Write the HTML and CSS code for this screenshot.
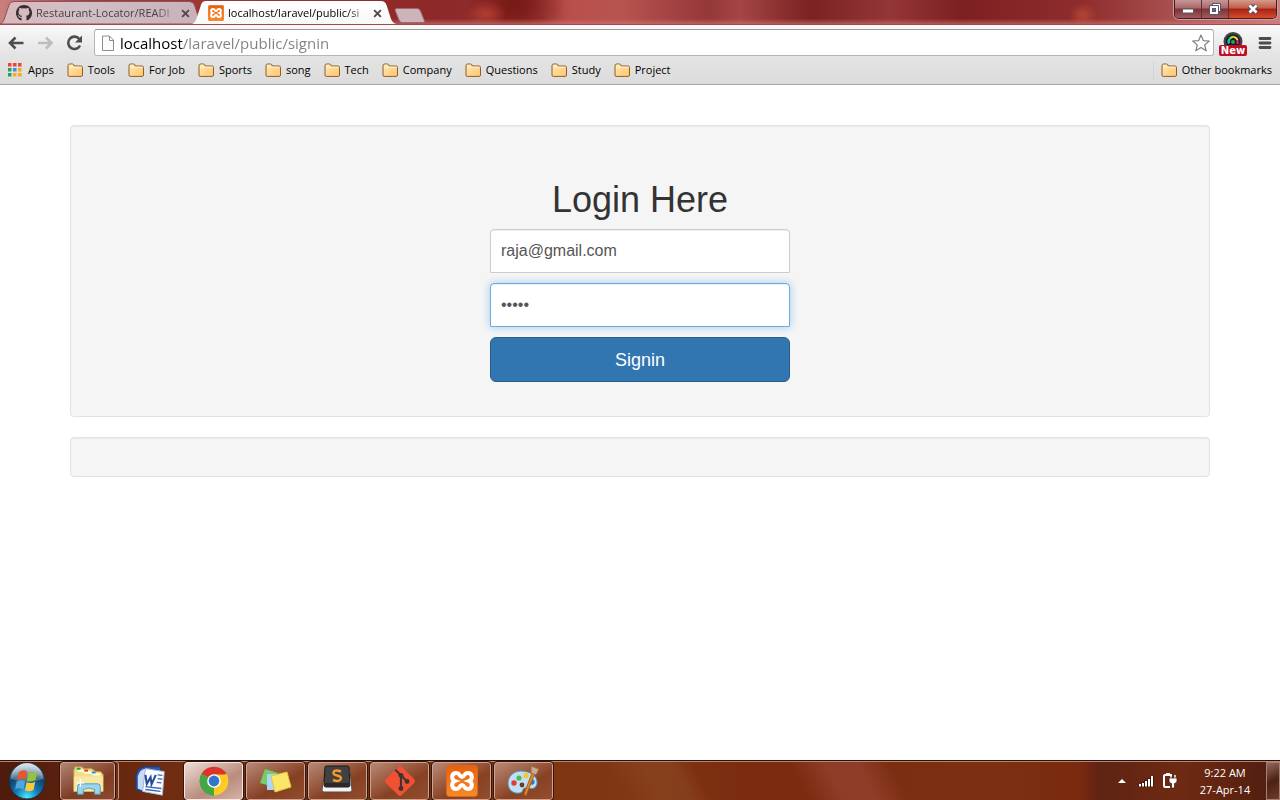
FILE: index.html
```html
<!DOCTYPE html>
<html lang="en">
<head>
<meta charset="utf-8">
<meta name="viewport" content="width=device-width, initial-scale=1">
<title>localhost/laravel/public/signin</title>
<link rel="stylesheet" href="styles.css">
</head>
<body>
<svg class="defs" width="0" height="0" aria-hidden="true">
  <defs>
    <linearGradient id="gold" x1="0" y1="0" x2="1" y2="1"><stop offset="0" stop-color="#ffe9b0"/><stop offset="1" stop-color="#ffc56d"/></linearGradient>
    <linearGradient id="orange" x1="0" y1="0" x2="0" y2="1"><stop offset="0" stop-color="#e8600c"/><stop offset="1" stop-color="#f98a28"/></linearGradient>
    <linearGradient id="tabOn" x1="0" y1="0" x2="0" y2="1"><stop offset="0" stop-color="#fff"/><stop offset="1" stop-color="#f8f8f8"/></linearGradient>
    <linearGradient id="tabOff" x1="0" y1="0" x2="1" y2="0"><stop offset="0" stop-color="#d9b9bd"/><stop offset=".4" stop-color="#cfc0c6"/><stop offset="1" stop-color="#c9b0b8"/></linearGradient>
    <radialGradient id="orb" cx=".5" cy=".95" r=".9"><stop offset="0" stop-color="#4fe6ff"/><stop offset=".35" stop-color="#127fb5"/><stop offset=".7" stop-color="#123f68"/><stop offset="1" stop-color="#7ba3bd"/></radialGradient>
    <linearGradient id="shine" x1="0" y1="0" x2="0" y2="1"><stop offset="0" stop-color="#fff" stop-opacity=".75"/><stop offset="1" stop-color="#fff" stop-opacity=".15"/></linearGradient>
  </defs>
  <symbol id="folder" viewBox="0 0 16 14">
    <path d="M1 12V2.500Q1 1 2.500 1H5.500Q7 1 7.300 3H14Q15.500 3 15.500 4.500V12Q15.500 13.400 14.200 13.400H2.200Q1 13.400 1 12Z" fill="url(#gold)" stroke="#8a5d33"/>
    <path d="M2 4.200H14.500M3 2.300H5.500" stroke="#fff3cf" fill="none"/>
  </symbol>
  <symbol id="xampp" viewBox="0 0 32 32">
    <rect x=".5" y=".5" width="31" height="31" rx="3" fill="url(#orange)" stroke="#d9661a"/>
    <path d="M10.500 8C5 8 5 14.500 9 16C5 17.500 5 24 10.500 24C14 24 13.500 20 16 20S18 24 21.500 24C27 24 27 17.500 23 16C27 14.500 27 8 21.500 8C18 8 18.500 12 16 12S14 8 10.500 8Z" fill="none" stroke="#fff" stroke-width="4"/>
  </symbol>
  <symbol id="cross" viewBox="0 0 8 8"><path d="M1 1L7 7M7 1L1 7" stroke="#54484b" stroke-width="1.700"/></symbol>
</svg>

<header class="titlebar">
  <nav class="tabs" aria-label="Tabs">
    <div class="tab">
      <svg class="shape" viewBox="0 0 204 24" preserveAspectRatio="none" aria-hidden="true"><path d="M0 24C3 23 4 20 5 17L9 5Q10 1.500 14 1.500H189Q193 1.500 194.500 5L199 19Q200.500 23 204 24Z" fill="url(#tabOff)" stroke="#8d5259"/></svg>
      <svg class="fav" viewBox="0 0 16 16" aria-hidden="true"><path d="M5.500 15.600V12.800C3.300 13.200 2.800 12 2.400 11.200L1.500 10.400Q2.900 10 3.700 11.300Q4.400 12.300 5.600 11.800L6 10.800C3.700 10.500 2.500 9.300 2.500 7Q2.500 5.800 3.300 4.900Q3 3.800 3.500 2.800Q4.600 2.800 5.800 3.600Q8 3 10.200 3.600Q11.400 2.800 12.500 2.800Q13 3.800 12.700 4.900Q13.500 5.800 13.500 7C13.500 9.300 12.300 10.500 10 10.800Q10.500 11.400 10.500 12.300V15.600A8 8 0 1 0 5.500 15.600Z" fill="#382d30"/></svg>
      <a class="tab-name" href="#">Restaurant-Locator/READI</a>
      <button class="tab-close" aria-label="Close tab"><svg viewBox="0 0 8 8"><use href="#cross"/></svg></button>
    </div>
    <div class="tab active">
      <svg class="shape" viewBox="0 0 204 24" preserveAspectRatio="none" aria-hidden="true"><path d="M0 24C3 23 4 20 5 17L9 5Q10 1 14 1H189Q193 1 194.500 5L199 19Q200.500 23 204 24Z" fill="url(#tabOn)"/></svg>
      <svg class="fav" viewBox="0 0 32 32" aria-hidden="true"><use href="#xampp"/></svg>
      <a class="tab-name" href="#">localhost/laravel/public/si</a>
      <button class="tab-close" aria-label="Close tab"><svg viewBox="0 0 8 8"><use href="#cross"/></svg></button>
    </div>
    <button class="new-tab" aria-label="New tab"><svg viewBox="0 0 32 15"><path d="M1 2Q1 .5 3 .5H23Q25.500 .5 26.500 3L30.500 13Q31 14.500 29 14.500H8Q6 14.500 5 12Z" fill="#cdb4ba" stroke="#9c6970"/></svg></button>
  </nav>
  <div class="window-controls">
    <button aria-label="Minimize"><svg viewBox="0 0 14 12"><rect x="1.500" y="6" width="11" height="4" rx="1" fill="#fff" stroke="#555866"/></svg></button>
    <button aria-label="Restore"><svg viewBox="0 0 14 12"><path d="M4.500 .5H12.500V8.500H10.500V11.500H1.500V2.500H4.500Z" fill="#fff" stroke="#555866"/><path d="M3.500 2.500H10.500V9.500" fill="none" stroke="#555866"/><rect x="4.500" y="5.500" width="3" height="3" fill="#9e5558" stroke="#555866"/></svg></button>
    <button class="close" aria-label="Close"><svg viewBox="0 0 14 12"><path d="M3.500 2.500L10.500 9.500M10.500 2.500L3.500 9.500" stroke="#4e5366" stroke-width="4.600"/><path d="M3.500 2.500L10.500 9.500M10.500 2.500L3.500 9.500" stroke="#fff" stroke-width="2.600"/></svg></button>
  </div>
</header>

<div class="chrome">
  <div class="toolbar">
    <button class="tool" aria-label="Back"><svg viewBox="0 0 18 18"><path d="M16.500 9H3M8.500 3.500L3 9L8.500 14.500" fill="none" stroke="#4d4d4d" stroke-width="2.600"/></svg></button>
    <button class="tool" aria-label="Forward"><svg viewBox="0 0 18 18"><path d="M2 9H15.500M10 3.500L15.500 9L10 14.500" fill="none" stroke="#bdbdbd" stroke-width="2.600"/></svg></button>
    <button class="tool" aria-label="Reload"><svg viewBox="0 0 18 18"><path d="M15 11.500A6.200 6.200 0 1 1 14.300 5" fill="none" stroke="#4d4d4d" stroke-width="2.600"/><path d="M17 1.500V8.500H10Z" fill="#4d4d4d"/></svg></button>
    <label class="omnibox">
      <svg class="page-icon" viewBox="0 0 12 16" aria-hidden="true"><path d="M.5 1H7.500L11.500 5V15.500H.5ZM7.500 1V5.500H11.500" fill="#fcfcfc" stroke="#8c8c8c"/></svg>
      <input class="address" type="text" aria-label="Address" value="localhost/laravel/public/signin">
      <svg class="star" viewBox="0 0 18 18" aria-hidden="true"><path d="M9 1L11.300 6.600L17.300 7L12.700 10.900L14.200 16.800L9 13.600L3.800 16.800L5.300 10.900L.7 7L6.700 6.600Z" fill="#fff" stroke="#7f7f7f" stroke-width="1.200" stroke-linejoin="round"/></svg>
    </label>
    <button class="extension" aria-label="Camera extension"><svg viewBox="0 0 28 24"><circle cx="14" cy="10.500" r="9.500" fill="#3d444a"/><circle cx="14" cy="10.500" r="7" fill="#16191c"/><path d="M10 12.500A4.500 4.500 0 0 1 11 7.500" stroke="#18c9d6" stroke-width="2.200" fill="none"/><path d="M11 7.500A4.500 4.500 0 0 1 15 6" stroke="#a9e019" stroke-width="2.200" fill="none"/><path d="M15 6A4.500 4.500 0 0 1 18.500 9" stroke="#f2dd2c" stroke-width="2.200" fill="none"/><path d="M18.500 9V13" stroke="#e2218b" stroke-width="2.200"/><circle cx="14" cy="11" r="2" fill="#26a651"/></svg><span class="badge">New</span></button>
    <button class="menu" aria-label="Menu"><svg viewBox="0 0 14 14"><path d="M2 2.500H12M2 7H12M2 11.500H12" stroke="#4d4d4d" stroke-width="2.800" stroke-linecap="round"/></svg></button>
  </div>
  <nav class="bookmarks" aria-label="Bookmarks">
    <a href="#"><svg class="apps" viewBox="0 0 14 14" aria-hidden="true"><path d="M0 0H3.500V3.500H0ZM5 0H8.500V3.500H5ZM10 0H13.500V3.500H10Z" fill="#f2403a"/><path d="M0 5H3.500V8.500H0ZM0 10H3.500V13.500H0Z" fill="#27a05a"/><path d="M5 5H8.500V8.500H5Z" fill="#3c8cf5"/><path d="M10 5H13.500V8.500H10ZM5 10H8.500V13.500H5ZM10 10H13.500V13.500H10Z" fill="#f8ac14"/></svg>Apps</a>
    <a href="#"><svg viewBox="0 0 16 14"><use href="#folder"/></svg>Tools</a>
    <a href="#"><svg viewBox="0 0 16 14"><use href="#folder"/></svg>For Job</a>
    <a href="#"><svg viewBox="0 0 16 14"><use href="#folder"/></svg>Sports</a>
    <a href="#"><svg viewBox="0 0 16 14"><use href="#folder"/></svg>song</a>
    <a href="#"><svg viewBox="0 0 16 14"><use href="#folder"/></svg>Tech</a>
    <a href="#"><svg viewBox="0 0 16 14"><use href="#folder"/></svg>Company</a>
    <a href="#"><svg viewBox="0 0 16 14"><use href="#folder"/></svg>Questions</a>
    <a href="#"><svg viewBox="0 0 16 14"><use href="#folder"/></svg>Study</a>
    <a href="#"><svg viewBox="0 0 16 14"><use href="#folder"/></svg>Project</a>
    <a class="other" href="#"><svg viewBox="0 0 16 14"><use href="#folder"/></svg>Other bookmarks</a>
  </nav>
</div>

<main class="page">
  <div class="container">
    <section class="well">
      <form class="form-signin">
        <h2>Login Here</h2>
        <input class="form-control" type="email" aria-label="Email address" value="raja@gmail.com">
        <input class="form-control focused" type="password" aria-label="Password" value="12345">
        <button class="btn" type="button">Signin</button>
      </form>
    </section>
    <div class="well"></div>
  </div>
</main>

<footer class="taskbar">
  <button class="start" aria-label="Start"><svg viewBox="0 0 38 38"><circle cx="19" cy="19" r="18" fill="url(#orb)" stroke="#1b2c3b"/><path d="M3 17A16 16 0 0 1 35 17Q19 23 3 17Z" fill="url(#shine)"/><path d="M11 10Q15 7 19 9.500L17.500 18Q13.500 15.500 9 18Z" fill="#e8542b"/><path d="M20.500 10Q25 12 29.500 9.500L27.500 18Q23 20.500 18.800 18.500Z" fill="#93c43c"/><path d="M8.700 19.500Q13 17 17.200 19.500L15.500 27.500Q11.500 25 7 27.500Z" fill="#54a4dc"/><path d="M18.600 20Q23 22 27.200 19.700L25.500 28Q21 30.500 17 28.200Z" fill="#fbcb3c"/></svg></button>
  <button class="task open stacked" aria-label="File Explorer"><svg viewBox="0 0 36 32"><path d="M3 5V27H34V9L31 6H26L22 3H14L11 1H4Z" fill="#f2dc86" stroke="#bd9b43"/><path d="M7 5H12L15 7H21L24 9H31" stroke="#fffbe2" stroke-width="2.500" fill="none"/><path d="M6 3H10" stroke="#1fa51f" stroke-width="2"/><path d="M14 5H18" stroke="#d83923" stroke-width="2"/><path d="M22 7H26" stroke="#2a86dd" stroke-width="2"/><path d="M3 11H34V27H3Z" fill="#f9ebaa" opacity=".8"/><path d="M7 30V22Q7 19 10 19H28Q31 19 31 22V30H25V25Q19 22 13 25V30Z" fill="#9bd4ec" stroke="#4c9dbf"/><path d="M10 14V22M6 18H14" stroke="#fff" stroke-width="1.200"/></svg></button>
  <button class="task" aria-label="Word"><svg viewBox="0 0 36 32"><path d="M1 25V10Q3 2 10 1H27V27H8Z" fill="#2e58ae" stroke="#173a80"/><path d="M3 24V11Q5 4 11 3H16Q9 9 8 26Z" fill="#c9daf6"/><path d="M11 3L31 6L29 31L8 27Z" fill="#fbfcff" stroke="#a7b6d2"/><path d="M11 9.500L12.500 19L16.500 12L17.500 19.500L22 9.500" fill="none" stroke="#254a98" stroke-width="2.200"/><path d="M24 9.500L29 10M24 13.500L29 14M23 17.500L28 18M11 22L28 24M11 25L27 27" stroke="#3867b5" stroke-width="1.500"/></svg></button>
  <button class="task open current" aria-label="Chrome"><svg viewBox="0 0 32 32"><path d="M16 16L3.500 8.800A14.500 14.500 0 0 1 28.500 8.800Z" fill="#dc3429"/><path d="M16 16L28.500 8.800A14.500 14.500 0 0 1 16 30.500Z" fill="#fccb25"/><path d="M16 16L16 30.500A14.500 14.500 0 0 1 3.500 8.800Z" fill="#45a744"/><path d="M16 9.500H28.900L16 30.500L21 19Z" fill="#fccb25"/><path d="M3.500 8.800L10.500 19L16 23L16 30.500A14.500 14.500 0 0 1 3.500 8.800Z" fill="#45a744"/><circle cx="16" cy="16" r="6.800" fill="#fff"/><circle cx="16" cy="16" r="5.400" fill="#2f78c9"/></svg></button>
  <button class="task open" aria-label="Sticky Notes"><svg viewBox="0 0 34 32"><path d="M6 4L19 8L15 22L1 18Z" fill="#75cc68"/><path d="M8 9H22V25H8Z" fill="#a9d7f9"/><path d="M12 11L28 7L32 22L16 27Z" fill="#fae668" stroke="#e4c63d"/></svg></button>
  <button class="task open" aria-label="Sublime Text"><svg viewBox="0 0 34 32"><path d="M4 5Q4 3 6 3H27Q29 3 29 5L31 25Q31 27 29 27H3Q1 27 1 25Z" fill="#f3f3f3" stroke="#5b4943"/><path d="M4 2Q4 1 6 1H26Q28 1 28 2L29 20Q29 22 27 22H5Q3 22 3 20Z" fill="#414141" stroke="#191919"/><path d="M4 18H28V21H4Z" fill="#292929"/><path d="M20 6.500Q12.500 4 12.500 8C12.500 11.500 20 9.500 20 13.500Q19 17.500 12 15" fill="none" stroke="#f7992d" stroke-width="2.400"/></svg></button>
  <button class="task open" aria-label="Git"><svg viewBox="0 0 34 34"><path d="M17 1Q18 1 19 2L32 15Q34 17 32 19L19 32Q17 34 15 32L2 19Q0 17 2 15L15 2Q16 1 17 1Z" fill="#f05033"/><path d="M12 5L18 11V25M18 11L24 17" stroke="#413333" stroke-width="2.200" fill="none"/><circle cx="18" cy="11" r="2.600" fill="#413333"/><circle cx="18" cy="25" r="2.600" fill="#413333"/><circle cx="24.500" cy="17.500" r="2.600" fill="#413333"/></svg></button>
  <button class="task open" aria-label="XAMPP"><svg viewBox="0 0 32 32"><use href="#xampp"/></svg></button>
  <button class="task open" aria-label="Paint"><svg viewBox="0 0 34 32"><path d="M14 6C6 6 1 12 1 18C1 25 6 29 13 28C17 27 15 23 18 23C22 23 28 26 30 19C31 11 23 6 14 6Z" fill="#bfe0f4" stroke="#528fba"/><circle cx="7" cy="18" r="2.700" fill="#e4393c"/><circle cx="12" cy="13" r="2.600" fill="#52b848"/><circle cx="19" cy="10.500" r="2.700" fill="#fbc531"/><circle cx="15" cy="20" r="2.400" fill="#673c29"/><circle cx="25" cy="17" r="2.700" fill="#3579cf"/><path d="M28 8L19 31L17 29L25 8Z" fill="#e58a26" stroke="#a85c17"/><path d="M24 1L32 4L29 10L24 8Z" fill="#cba98b" stroke="#8f6d55"/></svg></button>
  <div class="tray">
    <button class="tray-icon" aria-label="Show hidden icons"><svg viewBox="0 0 22 18"><path d="M7 11L11 7L15 11Z" fill="#fff"/></svg></button>
    <button class="tray-icon" aria-label="Network"><svg viewBox="0 0 22 18"><path d="M5 12V15M8 10V15M11 8V15M14 6V15M17 4V15" stroke="#1a0d08" stroke-width="3.500" opacity=".6"/><path d="M5 12V14.500M8 11V14.500M11 9V14.500M14 7V14.500M17 4V14.500" stroke="#fff" stroke-width="2"/></svg></button>
    <button class="tray-icon" aria-label="Power"><svg viewBox="0 0 22 18"><path d="M13 3H6Q5 3 5 4V14Q5 15 6 15H11" fill="none" stroke="#fff" stroke-width="2"/><path d="M7 1.500H11" stroke="#fff"/><path d="M12 3V7M16 3V7" stroke="#fff" stroke-width="1.500"/><path d="M10 6H18V9Q18 11 15.500 11.500V16H12.500V11.500Q10 11 10 9Z" fill="#fff" stroke="#3c1609" stroke-width=".700"/></svg></button>
    <time class="clock" datetime="2014-04-27T09:22"><span>9:22 AM</span><span>27-Apr-14</span></time>
    <button class="desktop" aria-label="Show desktop"></button>
  </div>
</footer>
</body>
</html>
```

FILE: styles.css
```css
* { box-sizing: border-box; }

body {
  margin: 0;
  min-height: 100vh;
  display: flex;
  flex-direction: column;
  background: #fff;
  font: 11px/16px "Open Sans", "Noto Sans", sans-serif;
  color: #000;
}

button { padding: 0; border: 0; background: none; font: inherit; }
a { color: inherit; text-decoration: none; }
svg { display: block; flex: none; }
.defs { position: absolute; }

/* Title bar */
.titlebar {
  display: flex;
  justify-content: space-between;
  align-items: flex-start;
  height: 25px;
  padding-right: 3px;
  border-bottom: 1px solid #a5484b;
  background:
    linear-gradient(to bottom, transparent 78%, #d0777699),
    radial-gradient(ellipse 20px 14px at 486px 14px, #c74b38aa, transparent),
    radial-gradient(ellipse 14px 12px at 1083px 15px, #c7513baa, transparent),
    radial-gradient(ellipse 50px 40px at 515px 5px, #761813, transparent),
    linear-gradient(to right, #c9807d 0, #a53b3b 90px, #8c2827 440px, #943030 525px, #b94f4b 570px, #b85450 620px, #a04040 680px, #953838 710px, #a44645 740px, #8c3030 780px, #7b2223 810px, #943638 890px, #7d2021 960px, #8e2c2c 1080px, #a54a4a 1160px, #c98181 1280px);
}

.tabs { display: flex; height: 24px; min-width: 0; }

.tab {
  position: relative;
  display: flex;
  align-items: center;
  width: 204px;
  height: 24px;
  padding: 2px 14px 0 16px;
  color: #4a3d42;
}

.tab + .tab { margin-left: -12px; }
.tab.active { color: #000; }
.shape { position: absolute; inset: 0; width: 100%; height: 100%; }
.fav { position: relative; width: 16px; height: 16px; }

.tab-name {
  position: relative;
  flex: 1;
  min-width: 0;
  margin: 0 6px 0 4px;
  white-space: nowrap;
  -webkit-mask-image: linear-gradient(to left, #0003, #000 20px);
  mask-image: linear-gradient(to left, #0003, #000 20px);
}

.tab-close { position: relative; width: 9px; }
.tab-close svg { width: 9px; height: 9px; }
.new-tab { margin: 6px 0 0 -2px; }
.new-tab svg { width: 32px; height: 15px; }

.window-controls {
  display: flex;
  height: 19px;
  border: 1px solid #431d21;
  border-top: 0;
  border-radius: 0 0 5px 5px;
  box-shadow: 0 0 0 1px #d39c9c;
  overflow: hidden;
}

.window-controls button {
  display: grid;
  place-items: center;
  width: 27px;
  border-right: 1px solid #5d3034;
  background: linear-gradient(#c69798, #a96668 45%, #7b3338 50%, #a15a5d);
}

.window-controls .close {
  width: 47px;
  border-right: 0;
  background: linear-gradient(#d59a8d, #c25c48 45%, #a32412 50%, #d84b2d);
}

.window-controls svg { width: 14px; height: 12px; }

/* Browser toolbars */
.chrome {
  border-bottom: 1px solid #a5a5a5;
  background: linear-gradient(#f9f9f9, #e4e4e4 50%, #dcdcdc);
}

.toolbar {
  display: flex;
  align-items: center;
  height: 34px;
  padding: 1px 8px 0 7px;
}

.tool { margin-right: 11px; }
.tool svg { width: 18px; height: 18px; }

.omnibox {
  flex: 1;
  display: flex;
  align-items: center;
  height: 27px;
  padding: 0 3px 0 7px;
  border: 1px solid #b5b5b5;
  border-top-color: #999;
  border-radius: 3px;
  background: #fff;
}

.page-icon { width: 12px; height: 16px; }

.address {
  flex: 1;
  min-width: 0;
  margin-left: 6px;
  padding: 0;
  border: 0;
  outline: 0;
  font: 15px/22px "Open Sans", "Noto Sans", sans-serif;
  color: transparent;
  background: linear-gradient(to right, #000 63px, #808080 63px) text;
  -webkit-background-clip: text;
}

.star { width: 18px; height: 18px; }

.extension { position: relative; width: 28px; height: 24px; margin: 0 11px 0 5px; }
.extension svg { width: 28px; height: 24px; }

.badge {
  position: absolute;
  left: 0;
  right: 0;
  bottom: -1px;
  border-radius: 2px;
  background: #c00d25;
  color: #fff;
  font: bold 10px/11px "DejaVu Sans", sans-serif;
  text-align: center;
}

.menu svg { width: 14px; height: 14px; }

.bookmarks {
  display: flex;
  align-items: center;
  gap: 13px;
  height: 25px;
  padding: 0 8px 2px;
  white-space: nowrap;
}

.bookmarks a { display: flex; align-items: center; gap: 5px; padding-bottom: 2px; }
.bookmarks svg { width: 16px; height: 14px; }
.bookmarks .apps { width: 14px; height: 14px; margin-right: 1px; }
.bookmarks .other { margin-left: auto; padding-left: 7px; border-left: 1px solid #ced4da; }

/* Sign-in page */
.page {
  flex: 1;
  padding-top: 40px;
  font: 14px/20px "Liberation Sans", Arial, sans-serif;
  color: #333;
}

.container { max-width: 1170px; margin: 0 auto; padding: 0 15px; }

.well {
  min-height: 20px;
  margin-bottom: 20px;
  padding: 19px;
  border: 1px solid #e3e3e3;
  border-radius: 4px;
  background: #f5f5f5;
  box-shadow: inset 0 1px 1px rgba(0, 0, 0, .05);
}

.form-signin { max-width: 330px; margin: 0 auto; padding: 15px; }

.form-signin h2 {
  margin: 20px 0 10px;
  font-size: 36px;
  line-height: 39px;
  font-weight: 400;
  text-align: center;
}

.form-control {
  display: block;
  width: 100%;
  height: 44px;
  margin-bottom: 10px;
  padding: 10px;
  border: 1px solid #ccc;
  border-radius: 4px 4px 0 0;
  outline: 0;
  background: #fff;
  box-shadow: inset 0 1px 1px rgba(0, 0, 0, .075);
  font: 16px/22px "Liberation Sans", Arial, sans-serif;
  color: #555;
}

.form-control.focused {
  border-color: #66afe9;
  box-shadow: inset 0 1px 1px rgba(0, 0, 0, .075), 0 0 8px rgba(102, 175, 233, .6);
}

.btn {
  display: block;
  width: 100%;
  height: 45px;
  border: 1px solid #285e8e;
  border-radius: 6px;
  background: #3276b1;
  color: #fff;
  font-size: 18px;
}

/* Taskbar */
.taskbar {
  display: flex;
  height: 40px;
  padding-left: 8px;
  border-top: 1px solid #2d100b;
  box-shadow: inset 0 1px #b98472;
  background:
    linear-gradient(62deg, transparent 550px, #94583055 585px, #94583055 610px, transparent 628px),
    linear-gradient(62deg, transparent 715px, #a8544b66 745px, #a8544b66 775px, transparent 803px),
    linear-gradient(to right, #4d1a0c, #6f2c10 160px, #7b3511 480px, #803713 620px, #7b2b0f 760px, #7c3011 1000px, #7a2a0e 1080px, #5e2414 1100px, #6f2a12 1180px, #4e1d10);
  color: #fff;
}

.start { margin-right: 14px; }
.start svg { width: 38px; height: 38px; }

.task {
  display: grid;
  place-items: center;
  width: 59px;
  height: 38px;
  margin: 1px 3px 0 0;
  border: 1px solid transparent;
  border-radius: 3px;
}

.task.open {
  border-color: #cda391;
  outline: 1px solid #37140b;
  outline-offset: 0;
  background: linear-gradient(150deg, #c79f8fcc, #a3624aaa 45%, #8d482caa 60%, #a05a3caa);
}

.task.stacked { width: 55px; margin-right: 7px; box-shadow: 3px 0 0 #6c2d18, 4px 0 0 #c39581; }
.task.current { background: linear-gradient(150deg, #ecdcd6, #c29a8c 50%, #b98c7b 60%, #d3b3a7); border-color: #f6e7e1; }
.task svg { width: 34px; height: 32px; }

.tray { display: flex; align-items: center; margin-left: auto; }
.tray-icon svg { width: 22px; height: 18px; }
.tray-icon { margin-right: 2px; }

.clock {
  display: flex;
  flex-direction: column;
  width: 78px;
  margin: 0 2px 0 3px;
  line-height: 17px;
  text-align: center;
}

.desktop {
  width: 14px;
  height: 38px;
  margin-top: 1px;
  border: 1px solid #a77e70;
  background: linear-gradient(155deg, #93685c, #4c2216 50%, #6c3b2b);
}
```
